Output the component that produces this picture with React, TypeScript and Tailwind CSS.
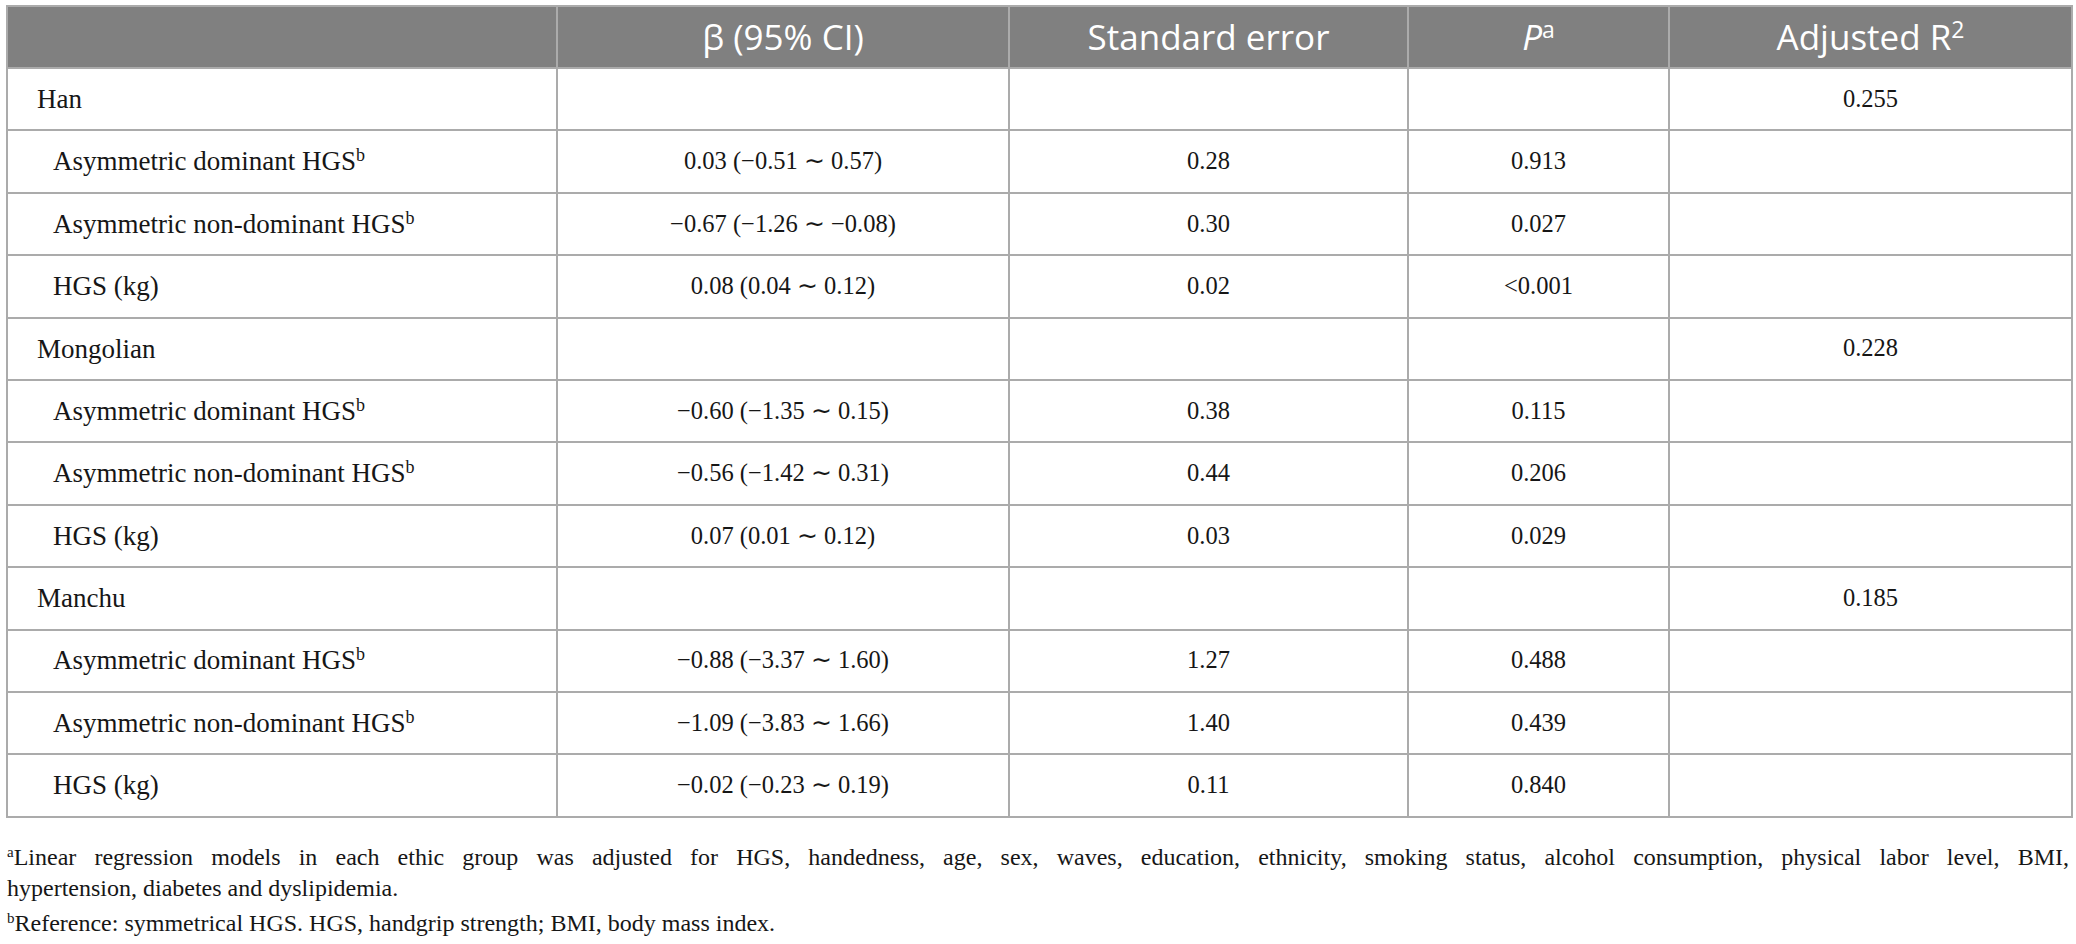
const serif = { fontFamily: '"Liberation Serif", "Times New Roman", serif' };

type Row = { label: string; group?: boolean; sup?: boolean; beta?: string; se?: string; p?: string; r2?: string };

const rows: Row[] = [
  { label: "Han", group: true, r2: "0.255" },
  { label: "Asymmetric dominant HGS", sup: true, beta: "0.03 (−0.51 ∼ 0.57)", se: "0.28", p: "0.913" },
  { label: "Asymmetric non-dominant HGS", sup: true, beta: "−0.67 (−1.26 ∼ −0.08)", se: "0.30", p: "0.027" },
  { label: "HGS (kg)", beta: "0.08 (0.04 ∼ 0.12)", se: "0.02", p: "<0.001" },
  { label: "Mongolian", group: true, r2: "0.228" },
  { label: "Asymmetric dominant HGS", sup: true, beta: "−0.60 (−1.35 ∼ 0.15)", se: "0.38", p: "0.115" },
  { label: "Asymmetric non-dominant HGS", sup: true, beta: "−0.56 (−1.42 ∼ 0.31)", se: "0.44", p: "0.206" },
  { label: "HGS (kg)", beta: "0.07 (0.01 ∼ 0.12)", se: "0.03", p: "0.029" },
  { label: "Manchu", group: true, r2: "0.185" },
  { label: "Asymmetric dominant HGS", sup: true, beta: "−0.88 (−3.37 ∼ 1.60)", se: "1.27", p: "0.488" },
  { label: "Asymmetric non-dominant HGS", sup: true, beta: "−1.09 (−3.83 ∼ 1.66)", se: "1.40", p: "0.439" },
  { label: "HGS (kg)", beta: "−0.02 (−0.23 ∼ 0.19)", se: "0.11", p: "0.840" },
];

const th = "border-2 border-[#ababab] bg-[#808080] text-white font-normal text-center text-[35px] h-[62px] p-0";
const td = "border-2 border-[#ababab] text-center text-[24.5px] text-[#161616] h-[62.4px] p-0";

export default function App() {
  return (
    <div className="bg-white w-[2076px] h-[944px] overflow-hidden">
      <div className="pt-[5px] pl-[6px]">
        <table className="table-fixed border-collapse w-[2065px]">
          <colgroup>
            <col className="w-[550px]" />
            <col className="w-[452px]" />
            <col className="w-[399px]" />
            <col className="w-[261px]" />
            <col className="w-[403px]" />
          </colgroup>
          <thead style={{ fontFamily: '"Open Sans", "Noto Sans", sans-serif' }}>
            <tr>
              <th className={th}></th>
              <th className={th}>β (95% CI)</th>
              <th className={th}>Standard error</th>
              <th className={th}>
                <i>P</i>
                <sup className="text-[23px]">a</sup>
              </th>
              <th className={th}>
                Adjusted R<sup className="text-[23px]">2</sup>
              </th>
            </tr>
          </thead>
          <tbody style={serif}>
            {rows.map((r, i) => (
              <tr key={i}>
                <td className={`${td} text-left text-[27px] ${r.group ? "pl-[29px]" : "pl-[45px]"}`}>
                  {r.label}
                  {r.sup && <sup className="text-[18px]">b</sup>}
                </td>
                <td className={td}>{r.beta ?? ""}</td>
                <td className={td}>{r.se ?? ""}</td>
                <td className={td}>{r.p ?? ""}</td>
                <td className={td}>{r.r2 ?? ""}</td>
              </tr>
            ))}
          </tbody>
        </table>
      </div>
      <div className="ml-[7px] w-[2062px] mt-[24px] text-[24px] text-[#161616] leading-[31px]" style={serif}>
        <p className="text-justify [text-align-last:justify]">
          <sup className="text-[15px]">a</sup>Linear regression models in each ethic group was adjusted for HGS, handedness, age, sex, waves,
          education, ethnicity, smoking status, alcohol consumption, physical labor level, BMI,
        </p>
        <p>hypertension, diabetes and dyslipidemia.</p>
        <p className="mt-[4px]">
          <sup className="text-[15px]">b</sup>Reference: symmetrical HGS. HGS, handgrip strength; BMI, body mass index.
        </p>
      </div>
    </div>
  );
}
